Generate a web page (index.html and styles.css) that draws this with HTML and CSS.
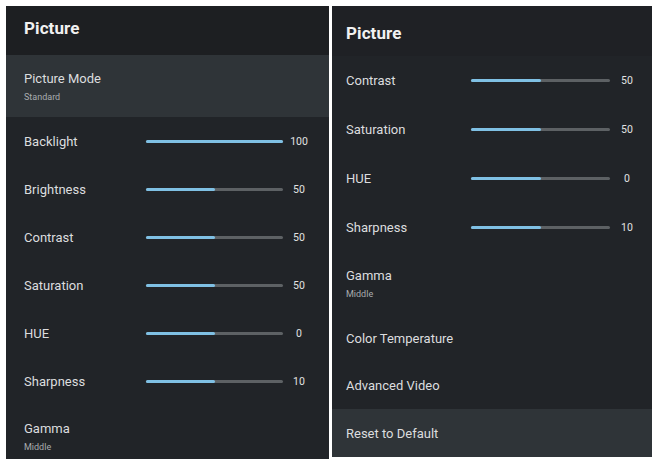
FILE: index.html
```html
<!DOCTYPE html>
<html>
<head>
<meta charset="utf-8">
<link rel="stylesheet" href="styles.css">
</head>
<body>
<div class="screen">
  <section class="panel panel-left">
    <header class="panel-head"><h1>Picture</h1></header>
    <div class="row row-two selected">
      <div class="label">Picture Mode</div>
      <div class="sub">Standard</div>
    </div>
    <div class="row slider-row"><span class="label">Backlight</span><span class="track"><span class="fill" style="width:100%"></span></span><span class="value">100</span></div>
    <div class="row slider-row"><span class="label">Brightness</span><span class="track"><span class="fill" style="width:50%"></span></span><span class="value">50</span></div>
    <div class="row slider-row"><span class="label">Contrast</span><span class="track"><span class="fill" style="width:50%"></span></span><span class="value">50</span></div>
    <div class="row slider-row"><span class="label">Saturation</span><span class="track"><span class="fill" style="width:50%"></span></span><span class="value">50</span></div>
    <div class="row slider-row"><span class="label">HUE</span><span class="track"><span class="fill" style="width:50%"></span></span><span class="value">0</span></div>
    <div class="row slider-row"><span class="label">Sharpness</span><span class="track"><span class="fill" style="width:50%"></span></span><span class="value">10</span></div>
    <div class="row row-two">
      <div class="label">Gamma</div>
      <div class="sub">Middle</div>
    </div>
  </section>
  <section class="panel panel-right">
    <header class="panel-head"><h1>Picture</h1></header>
    <div class="row slider-row"><span class="label">Contrast</span><span class="track"><span class="fill" style="width:50%"></span></span><span class="value">50</span></div>
    <div class="row slider-row"><span class="label">Saturation</span><span class="track"><span class="fill" style="width:50%"></span></span><span class="value">50</span></div>
    <div class="row slider-row"><span class="label">HUE</span><span class="track"><span class="fill" style="width:50%"></span></span><span class="value">0</span></div>
    <div class="row slider-row"><span class="label">Sharpness</span><span class="track"><span class="fill" style="width:50%"></span></span><span class="value">10</span></div>
    <div class="row row-two">
      <div class="label">Gamma</div>
      <div class="sub">Middle</div>
    </div>
    <div class="row plain"><span class="label">Color Temperature</span></div>
    <div class="row plain"><span class="label">Advanced Video</span></div>
    <div class="row plain selected"><span class="label">Reset to Default</span></div>
  </section>
</div>
</body>
</html>
```
FILE: styles.css
```css
* { box-sizing: border-box; }
html, body { margin: 0; padding: 0; background: #ffffff; }
body { font-family: Roboto, "Liberation Sans", sans-serif; }

.screen {
  display: flex;
  align-items: flex-start;
  gap: 3px;
  padding: 6px 4px 0 6px;
  height: 462px;
}

.panel {
  background: #212428;
  color: #dcdddf;
  overflow: hidden;
  display: flex;
  flex-direction: column;
}
.panel-left { width: 323px; height: 453px; }
.panel-right { width: 320px; height: 451px; }

.panel-head {
  flex: none;
  display: flex;
  align-items: center;
  background: #1d1f22;
}
.panel-left .panel-head { height: 49px; padding-left: 18px; padding-bottom: 6px; }
.panel-right .panel-head { height: 50px; padding-left: 14px; padding-top: 4px; background: #1f2125; }

h1 {
  margin: 0;
  font-size: 17px;
  font-weight: 700;
  color: #f1f1f1;
  letter-spacing: 0.1px;
}

.row { flex: none; }
.panel-left .row { padding-left: 18px; }
.panel-right .row { padding-left: 14px; }

.label { font-size: 13px; color: #dcdddf; }
.sub { font-size: 9px; color: #a9acaf; margin-top: 6px; }

.row-two {
  display: flex;
  flex-direction: column;
  justify-content: center;
}
.panel-left .row-two { height: 62px; }
.panel-right .row-two { height: 63px; }

.selected { background: #2f3438; }

.slider-row {
  display: flex;
  align-items: center;
}
.panel-left .slider-row { height: 48px; }
.panel-right .slider-row { height: 49px; }
.slider-row .label { flex: none; }
.panel-left .slider-row .label { width: 122px; }
.panel-right .slider-row .label { width: 125px; }

.track {
  flex: none;
  height: 3px;
  background: #5d6164;
  border-radius: 2px;
  display: flex;
}
.panel-left .track { width: 137px; }
.panel-right .track { width: 139px; }
.fill {
  height: 3px;
  background: #7fc0e4;
  border-radius: 2px;
}
.value {
  flex: none;
  font-size: 10.5px;
  text-align: center;
  color: #e2e2e2;
}
.panel-left .value { width: 24px; margin-left: 4px; }
.panel-right .value { width: 24px; margin-left: 5px; }

.plain {
  display: flex;
  align-items: center;
  height: 47px;
}
.panel-right .plain.selected { height: 48px; }
```
